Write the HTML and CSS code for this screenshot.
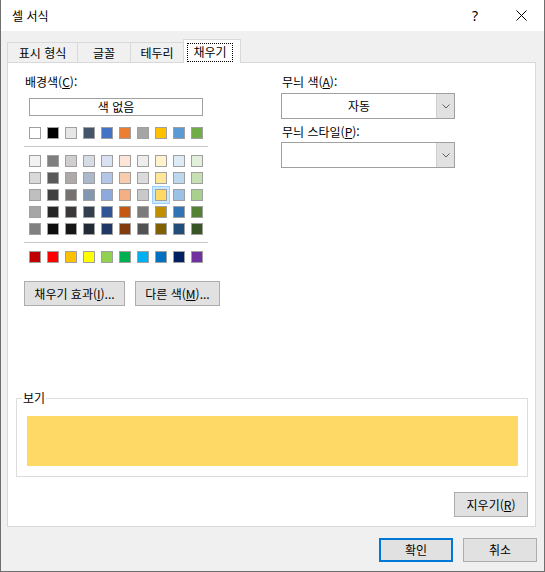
FILE: index.html
```html
<!DOCTYPE html>
<html lang="ko">
<head>
    <meta charset="UTF-8">
    <title>셀 서식</title>
    <link rel="stylesheet" href="styles.css">
</head>
<body>
    <div class="window">
        <div class="titlebar">
            <span class="title">셀 서식</span>
            <span class="tb-btn help">?</span>
            <span class="tb-btn close">
                <svg width="11" height="11" viewBox="0 0 11 11"><path d="M0.5 0.5 L10.5 10.5 M10.5 0.5 L0.5 10.5" stroke="#000" stroke-width="1" fill="none"/></svg>
            </span>
        </div>

        <div class="content">
            <div class="tabs">
                <div class="tab t1">표시 형식</div>
                <div class="tab t2">글꼴</div>
                <div class="tab t3">테두리</div>
                <div class="tab active"><span class="focus">채우기</span></div>
            </div>

            <div class="panel">
                <div class="cols">
                    <div class="left">
                        <div class="label">배경색(<u>C</u>):</div>
                        <div class="nocolor">색 없음</div>

                        <div class="swatches top-row">
                            <span class="sw" style="background:#ffffff"></span>
                            <span class="sw" style="background:#000000"></span>
                            <span class="sw" style="background:#e7e6e6"></span>
                            <span class="sw" style="background:#44546a"></span>
                            <span class="sw" style="background:#4472c4"></span>
                            <span class="sw" style="background:#ed7d31"></span>
                            <span class="sw" style="background:#a5a5a5"></span>
                            <span class="sw" style="background:#ffc000"></span>
                            <span class="sw" style="background:#5b9bd5"></span>
                            <span class="sw" style="background:#70ad47"></span>
                        </div>
                        <div class="sep"></div>

                        <div class="swatches theme">
                            <span class="sw" style="background:#f2f2f2"></span>
                            <span class="sw" style="background:#7f7f7f"></span>
                            <span class="sw" style="background:#d0cece"></span>
                            <span class="sw" style="background:#d6dce4"></span>
                            <span class="sw" style="background:#d9e1f2"></span>
                            <span class="sw" style="background:#fce4d6"></span>
                            <span class="sw" style="background:#ededed"></span>
                            <span class="sw" style="background:#fff2cc"></span>
                            <span class="sw" style="background:#ddebf7"></span>
                            <span class="sw" style="background:#e2efda"></span>

                            <span class="sw" style="background:#d9d9d9"></span>
                            <span class="sw" style="background:#595959"></span>
                            <span class="sw" style="background:#aeaaaa"></span>
                            <span class="sw" style="background:#acb9ca"></span>
                            <span class="sw" style="background:#b4c6e7"></span>
                            <span class="sw" style="background:#f8cbad"></span>
                            <span class="sw" style="background:#dbdbdb"></span>
                            <span class="sw" style="background:#ffe699"></span>
                            <span class="sw" style="background:#bdd7ee"></span>
                            <span class="sw" style="background:#c6e0b4"></span>

                            <span class="sw" style="background:#bfbfbf"></span>
                            <span class="sw" style="background:#404040"></span>
                            <span class="sw" style="background:#757171"></span>
                            <span class="sw" style="background:#8497b0"></span>
                            <span class="sw" style="background:#8ea9db"></span>
                            <span class="sw" style="background:#f4b084"></span>
                            <span class="sw" style="background:#c9c9c9"></span>
                            <span class="sw selected" style="background:#ffd966"></span>
                            <span class="sw" style="background:#9bc2e6"></span>
                            <span class="sw" style="background:#a9d08e"></span>

                            <span class="sw" style="background:#a6a6a6"></span>
                            <span class="sw" style="background:#262626"></span>
                            <span class="sw" style="background:#3a3838"></span>
                            <span class="sw" style="background:#333f4f"></span>
                            <span class="sw" style="background:#305496"></span>
                            <span class="sw" style="background:#c65911"></span>
                            <span class="sw" style="background:#7b7b7b"></span>
                            <span class="sw" style="background:#bf8f00"></span>
                            <span class="sw" style="background:#2f75b5"></span>
                            <span class="sw" style="background:#548235"></span>

                            <span class="sw" style="background:#808080"></span>
                            <span class="sw" style="background:#0d0d0d"></span>
                            <span class="sw" style="background:#161616"></span>
                            <span class="sw" style="background:#222b35"></span>
                            <span class="sw" style="background:#203764"></span>
                            <span class="sw" style="background:#833c0c"></span>
                            <span class="sw" style="background:#525252"></span>
                            <span class="sw" style="background:#806000"></span>
                            <span class="sw" style="background:#1f4e78"></span>
                            <span class="sw" style="background:#375623"></span>
                        </div>
                        <div class="sep"></div>

                        <div class="swatches std-row">
                            <span class="sw" style="background:#c00000"></span>
                            <span class="sw" style="background:#ff0000"></span>
                            <span class="sw" style="background:#ffc000"></span>
                            <span class="sw" style="background:#ffff00"></span>
                            <span class="sw" style="background:#92d050"></span>
                            <span class="sw" style="background:#00b050"></span>
                            <span class="sw" style="background:#00b0f0"></span>
                            <span class="sw" style="background:#0070c0"></span>
                            <span class="sw" style="background:#002060"></span>
                            <span class="sw" style="background:#7030a0"></span>
                        </div>

                        <div class="btn-row">
                            <button class="btn effects">채우기 효과(<u>I</u>)...</button>
                            <button class="btn more">다른 색(<u>M</u>)...</button>
                        </div>
                    </div>

                    <div class="right">
                        <div class="label">무늬 색(<u>A</u>):</div>
                        <div class="combo">
                            <span class="combo-value">자동</span>
                            <span class="combo-arrow">
                                <svg width="8" height="5" viewBox="0 0 8 5"><path d="M0.5 0.5 L4 4 L7.5 0.5" stroke="#606060" fill="none"/></svg>
                            </span>
                        </div>
                        <div class="label second">무늬 스타일(<u>P</u>):</div>
                        <div class="combo combo-2">
                            <span class="combo-value"></span>
                            <span class="combo-arrow">
                                <svg width="8" height="5" viewBox="0 0 8 5"><path d="M0.5 0.5 L4 4 L7.5 0.5" stroke="#606060" fill="none"/></svg>
                            </span>
                        </div>
                    </div>
                </div>

                <fieldset class="preview">
                    <legend>보기</legend>
                    <div class="sample"></div>
                </fieldset>

                <div class="clear-row">
                    <button class="btn clear">지우기(<u>R</u>)</button>
                </div>
            </div>

            <div class="footer">
                <button class="btn ok">확인</button>
                <button class="btn">취소</button>
            </div>
        </div>
    </div>
</body>
</html>
```

FILE: styles.css
```css
body {
    margin: 0;
    font-family: "Noto Sans CJK KR", "Noto Sans", sans-serif;
    font-size: 12px;
    color: #000;
    background-color: #fff;
}
.window {
    width: 545px;
    height: 572px;
    box-sizing: border-box;
    border: 1px solid #6f6f6f;
    border-top: none;
    display: flex;
    flex-direction: column;
}
.titlebar {
    height: 31px;
    flex: none;
    display: flex;
    align-items: center;
    background-color: #fff;
}
.title {
    flex: 1;
    padding-left: 11px;
    font-size: 12px;
    line-height: 16px;
}
.tb-btn {
    width: 46px;
    height: 31px;
    display: flex;
    align-items: center;
    justify-content: center;
}
.help {
    font-size: 14px;
    font-family: "Noto Sans", sans-serif;
}
.close svg {
    display: block;
}

.content {
    flex: 1;
    background-color: #f0f0f0;
    padding: 8px 8px 0 6px;
    display: flex;
    flex-direction: column;
}

.tabs {
    height: 23px;
    display: flex;
    align-items: flex-end;
}
.tab {
    box-sizing: border-box;
    height: 20px;
    border: 1px solid #d9d9d9;
    border-bottom: none;
    margin-right: -1px;
    background-color: #f0f0f0;
    display: flex;
    align-items: center;
    justify-content: center;
    line-height: 16px;
}
.t1 { width: 71px; }
.t2 { width: 54px; }
.t3 { width: 54px; }
.tab.active {
    width: 58px;
    height: 24px;
    margin-bottom: -1px;
    background-color: #fff;
    position: relative;
    z-index: 1;
    justify-content: flex-start;
    padding-left: 3px;
}
.focus {
    width: 46px;
    height: 19px;
    box-sizing: border-box;
    border: 1px dotted #000;
    display: flex;
    align-items: center;
    justify-content: center;
    margin-top: 1px;
}

.panel {
    height: 465px;
    flex: none;
    box-sizing: border-box;
    background-color: #fff;
    border: 1px solid #d9d9d9;
    display: flex;
    flex-direction: column;
    padding-bottom: 9px;
}
.cols {
    display: flex;
    padding: 11px 0 0 16px;
}
.left {
    width: 186px;
    flex: none;
}
.right {
    width: 174px;
    flex: none;
    margin-left: 71px;
}
.label {
    height: 16px;
    line-height: 16px;
    padding-left: 1px;
}
.nocolor {
    margin: 8px 0 0 5px;
    width: 174px;
    height: 18px;
    box-sizing: border-box;
    border: 1px solid #a0a0a0;
    text-align: center;
    line-height: 16px;
}

.swatches {
    display: grid;
    grid-template-columns: repeat(10, 12px);
    column-gap: 6px;
    row-gap: 5px;
    margin-left: 5px;
}
.top-row { margin-top: 11px; }
.theme { margin-top: 8px; }
.std-row { margin-top: 8px; }
.sw {
    width: 12px;
    height: 12px;
    box-sizing: border-box;
    border: 1px solid #a0a0a0;
}
.sw.selected {
    box-shadow: 0 0 0 2px #cce8ff, 0 0 0 3px #99d1ff;
}
.sep {
    height: 1px;
    width: 184px;
    margin-top: 7px;
    background-color: #c8c8c8;
}

.btn {
    font-family: inherit;
    font-size: 12px;
    color: #000;
    height: 25px;
    box-sizing: border-box;
    background-color: #e1e1e1;
    border: 1px solid #adadad;
    padding: 0;
    line-height: 16px;
    flex: none;
}
.btn-row {
    display: flex;
    gap: 10px;
    margin-top: 18px;
}
.effects { width: 101px; }
.more { width: 85px; }

.combo {
    margin-top: 3px;
    height: 26px;
    box-sizing: border-box;
    border: 1px solid #a0a0a0;
    display: flex;
}
.combo-2 {
    margin-top: 2px;
}
.combo-value {
    flex: 1;
    display: flex;
    align-items: center;
    justify-content: center;
    line-height: 16px;
}
.combo-arrow {
    width: 17px;
    background-color: #e1e1e1;
    border-left: 1px solid #cfcfcf;
    display: flex;
    align-items: center;
    justify-content: center;
}
.combo-arrow svg {
    display: block;
}
.label.second {
    margin-top: 5px;
}

.preview {
    margin: auto 7px 0 8px;
    border: 1px solid #dcdcdc;
    padding: 10px 9px 10px 10px;
    min-width: 0;
}
.preview legend {
    padding: 0 1px;
    margin-left: -5px;
    line-height: 16px;
}
.sample {
    height: 50px;
    background-color: #ffd966;
}

.clear-row {
    display: flex;
    justify-content: flex-end;
    margin: 15px 7px 0 0;
}
.clear {
    width: 74px;
}

.footer {
    display: flex;
    justify-content: flex-end;
    gap: 10px;
    margin: 11px -1px 0 0;
}
.footer .btn {
    width: 74px;
    height: 24px;
}
.footer .ok {
    border: 2px solid #0078d7;
}
```
